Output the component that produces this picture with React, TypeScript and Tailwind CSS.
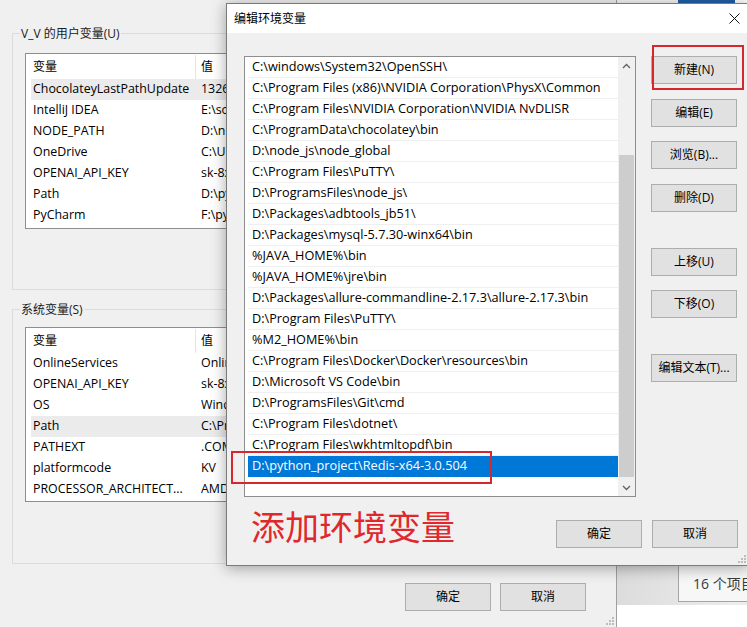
import React from "react";

function Btn({ children, className = "" }: { children: React.ReactNode; className?: string }) {
  return (
    <div
      className={`h-[28px] w-[86px] flex items-center justify-center bg-[#e1e1e1] border border-[#adadad] text-[12px] text-black ${className}`}
    >
      {children}
    </div>
  );
}

function Grip() {
  return (
    <svg width="9" height="9" viewBox="0 0 9 9">
      <rect x="7" y="1" width="2" height="2" fill="#bdbdbd" />
      <rect x="4" y="4" width="2" height="2" fill="#bdbdbd" />
      <rect x="7" y="4" width="2" height="2" fill="#bdbdbd" />
      <rect x="1" y="7" width="2" height="2" fill="#bdbdbd" />
      <rect x="4" y="7" width="2" height="2" fill="#bdbdbd" />
      <rect x="7" y="7" width="2" height="2" fill="#bdbdbd" />
    </svg>
  );
}

function VarList({
  rows,
  highlight,
  height,
}: {
  rows: [string, string][];
  highlight: number;
  height: string;
}) {
  return (
    <div className={`w-[570px] bg-white border border-[#8e8e8e] ${height}`}>
      <div className="h-[25px] flex items-center">
        <div className="w-[169px] pl-[7px]">变量</div>
        <div className="w-px h-[24px] bg-[#e5e5e5]" />
        <div className="pl-[5px]">值</div>
      </div>
      {rows.map((r, i) => (
        <div
          key={i}
          className={`ml-[5px] h-[21px] flex items-center ${i === highlight ? "bg-[#ebebeb]" : ""}`}
        >
          <div className="w-[164px] pl-[2px] whitespace-nowrap overflow-hidden text-[12.4px]">{r[0]}</div>
          <div className="ml-[6px] w-[30px] whitespace-nowrap overflow-hidden text-[12.4px]">{r[1]}</div>
        </div>
      ))}
    </div>
  );
}

const userVars: [string, string][] = [
  ["ChocolateyLastPathUpdate", "132600000000000000"],
  ["IntelliJ IDEA", "E:\\software\\IntelliJ"],
  ["NODE_PATH", "D:\\node_js\\node_global"],
  ["OneDrive", "C:\\Users\\V_V\\OneDrive"],
  ["OPENAI_API_KEY", "sk-8xxxxxxxxxxxx"],
  ["Path", "D:\\python_project"],
  ["PyCharm", "F:\\pycharm\\bin"],
];

const sysVars: [string, string][] = [
  ["OnlineServices", "Online Services"],
  ["OPENAI_API_KEY", "sk-8xxxxxxxxxxxx"],
  ["OS", "Windows_NT"],
  ["Path", "C:\\Program Files"],
  ["PATHEXT", ".COM;.EXE;.BAT"],
  ["platformcode", "KV"],
  ["PROCESSOR_ARCHITECT...", "AMD64"],
];

const paths = [
  "C:\\windows\\System32\\OpenSSH\\",
  "C:\\Program Files (x86)\\NVIDIA Corporation\\PhysX\\Common",
  "C:\\Program Files\\NVIDIA Corporation\\NVIDIA NvDLISR",
  "C:\\ProgramData\\chocolatey\\bin",
  "D:\\node_js\\node_global",
  "C:\\Program Files\\PuTTY\\",
  "D:\\ProgramsFiles\\node_js\\",
  "D:\\Packages\\adbtools_jb51\\",
  "D:\\Packages\\mysql-5.7.30-winx64\\bin",
  "%JAVA_HOME%\\bin",
  "%JAVA_HOME%\\jre\\bin",
  "D:\\Packages\\allure-commandline-2.17.3\\allure-2.17.3\\bin",
  "D:\\Program Files\\PuTTY\\",
  "%M2_HOME%\\bin",
  "C:\\Program Files\\Docker\\Docker\\resources\\bin",
  "D:\\Microsoft VS Code\\bin",
  "D:\\ProgramsFiles\\Git\\cmd",
  "C:\\Program Files\\dotnet\\",
  "C:\\Program Files\\wkhtmltopdf\\bin",
  "D:\\python_project\\Redis-x64-3.0.504",
];

function Chevron({ up }: { up: boolean }) {
  return (
    <svg width="9" height="6" viewBox="0 0 9 6">
      <polyline
        points={up ? "1,5 4.5,1.5 8,5" : "1,1 4.5,4.5 8,1"}
        fill="none"
        stroke="#606060"
        strokeWidth="1.3"
      />
    </svg>
  );
}

export default function App() {
  return (
    <div className="relative w-[747px] h-[627px] overflow-hidden bg-white text-[12px] text-black font-['Open_Sans','Noto_Sans_CJK_SC',sans-serif]">
      {/* Explorer window behind, on the right */}
      <div className="absolute left-[617px] top-0 w-[130px] h-[627px] bg-white flex flex-col">
        <div className="h-[4px] flex">
          <div className="w-[61px] bg-[#f5f5f5]" />
          <div className="w-[57px] bg-[#1f5fa6]" />
        </div>
        <div className="h-[561px]" />
        <div className="h-[40px] bg-gradient-to-r from-[#dcdcdc] to-[#eeeeee] flex">
          <div className="ml-[61px] flex-1 h-[37px] bg-[#f7f7f7] border-l border-b border-[#a5a5a5] flex items-center pl-[14px] text-[14px] text-[#3a3a3a] whitespace-nowrap">
            16 个项目
          </div>
        </div>
      </div>

      {/* Environment variables window */}
      <div className="absolute left-0 top-0 w-[617px] h-[627px] bg-[#f0f0f0] border-r border-[#a0a0a0]">
        <div className="pt-[33px] pl-[12px] flex flex-col">
          <div className="relative w-[592px] h-[257px] border border-[#dcdcdc] pt-[19px] pl-[12px]">
            <div className="absolute left-[7px] top-[-9px] px-[1px] leading-[17px] bg-[#f0f0f0] text-[#202020]">
              V_V 的用户变量(U)
            </div>
            <VarList rows={userVars} highlight={0} height="h-[176px]" />
          </div>
          <div className="relative mt-[19px] w-[592px] h-[255px] border border-[#dcdcdc] pt-[17px] pl-[12px]">
            <div className="absolute left-[7px] top-[-9px] px-[1px] leading-[17px] bg-[#f0f0f0] text-[#202020]">
              系统变量(S)
            </div>
            <VarList rows={sysVars} highlight={3} height="h-[175px]" />
          </div>
        </div>
        <div className="mt-[19px] pl-[405px] flex gap-[9px]">
          <Btn>确定</Btn>
          <Btn>取消</Btn>
        </div>
        <div className="absolute right-[2px] bottom-[2px]">
          <Grip />
        </div>
      </div>

      {/* Edit environment variable dialog */}
      <div className="absolute left-[226px] top-[3px] w-[523px] h-[563px] bg-[#f0f0f0] border border-[#7a7a7a] shadow-[0_2px_14px_rgba(0,0,0,0.35)] flex flex-col">
        <div className="h-[29px] bg-white flex items-center pl-[7px] shrink-0">
          <div className="text-[12px] text-black">编辑环境变量</div>
          <div className="ml-auto w-[28px] h-full flex items-center justify-center">
            <svg width="11" height="11" viewBox="0 0 11 11">
              <path d="M0.5 0.5 L10.5 10.5 M10.5 0.5 L0.5 10.5" stroke="#111" strokeWidth="1" />
            </svg>
          </div>
        </div>
        <div className="relative flex-1 pt-[23px] pl-[17px] flex flex-col">
          <div className="flex items-start">
            <div className="w-[392px] h-[441px] bg-white border border-[#8e8e8e] flex">
              <div className="flex-1 pl-[3px] flex flex-col">
                {paths.map((p, i) => {
                  const sel = i === paths.length - 1;
                  return (
                    <div
                      key={i}
                      className={`h-[21px] shrink-0 flex items-center pl-[4px] whitespace-nowrap overflow-hidden border-b text-[12.7px] ${
                        sel ? "bg-[#0078d7] text-white border-[#0078d7]" : "border-[#efefef]"
                      }`}
                    >
                      {p}
                    </div>
                  );
                })}
              </div>
              <div className="w-[17px] bg-[#f0f0f0] flex flex-col">
                <div className="h-[17px] flex items-center justify-center">
                  <Chevron up={true} />
                </div>
                <div className="flex-1 pt-[81px] px-[1px]">
                  <div className="h-[322px] bg-[#cdcdcd]" />
                </div>
                <div className="h-[17px] flex items-center justify-center">
                  <Chevron up={false} />
                </div>
              </div>
            </div>
            <div className="ml-[15px] flex flex-col">
              <Btn>新建(N)</Btn>
              <Btn className="mt-[15px]">编辑(E)</Btn>
              <Btn className="mt-[14px]">浏览(B)...</Btn>
              <Btn className="mt-[15px]">删除(D)</Btn>
              <Btn className="mt-[36px]">上移(U)</Btn>
              <Btn className="mt-[14px]">下移(O)</Btn>
              <Btn className="mt-[36px]">编辑文本(T)...</Btn>
            </div>
          </div>
          <div className="mt-[23px] flex items-start">
            <div className="w-[312px] pl-[7px]">
              <div className="-mt-[14px] text-[34px] leading-[40px] text-[#e0282c] whitespace-nowrap font-['Noto_Sans_CJK_SC',sans-serif]">
                添加环境变量
              </div>
            </div>
            <Btn>确定</Btn>
            <Btn className="ml-[10px]">取消</Btn>
          </div>
          <div className="absolute right-[2px] bottom-[2px]">
            <Grip />
          </div>
        </div>
      </div>

      {/* Red annotation boxes */}
      <div className="absolute left-[231px] top-[451px] w-[261px] h-[33px] border-2 border-[#d9262c]" />
      <div className="absolute left-[652px] top-[45px] w-[92px] h-[45px] border-2 border-[#d9262c]" />
    </div>
  );
}
